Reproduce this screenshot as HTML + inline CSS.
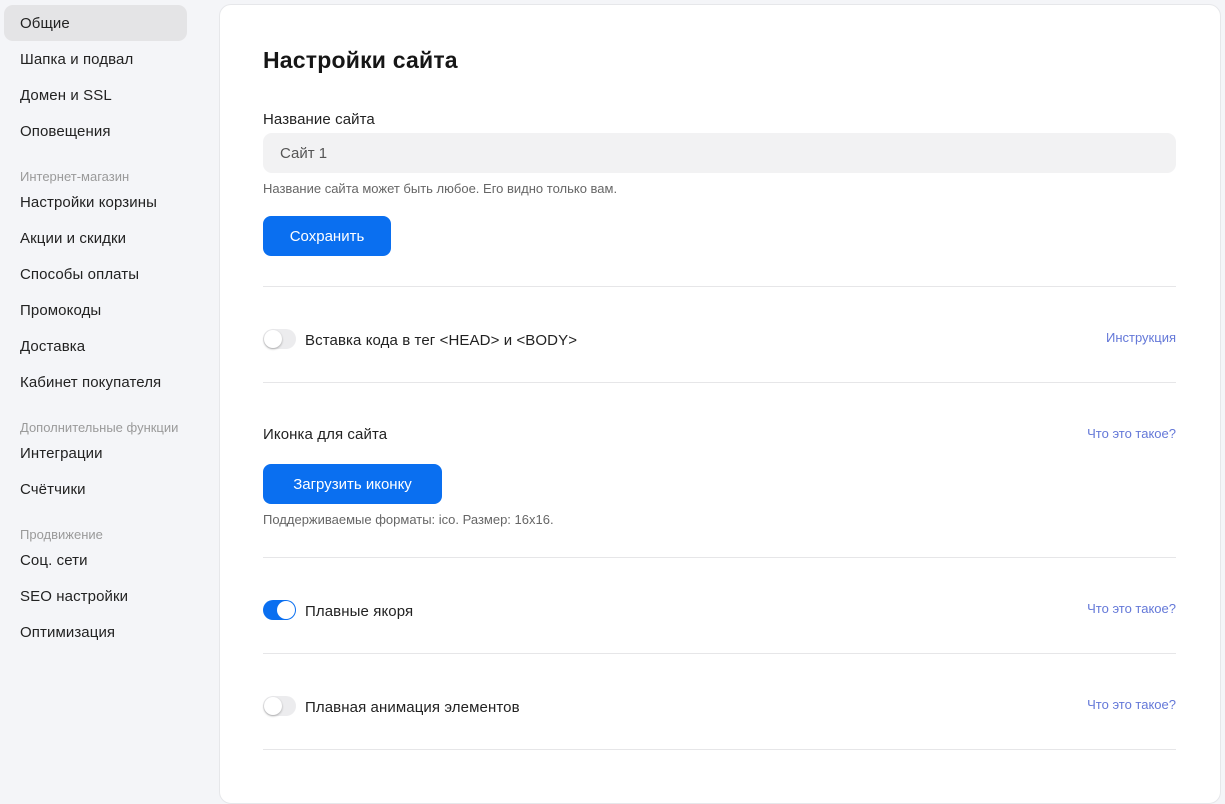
<!DOCTYPE html>
<html><head><meta charset="utf-8"><style>
*{box-sizing:border-box;margin:0;padding:0}
body{width:1225px;height:787px;overflow:hidden;background:#f4f5f8;font-family:"Liberation Sans",Arial,sans-serif;color:#1f1f1f;position:relative}
.nav{position:absolute;left:4px;top:0;width:183px}
.it{position:absolute;left:0;width:183px;height:36px;line-height:38px;padding-left:16px;font-size:15px;color:#222;border-radius:9px;letter-spacing:.1px}
.it.a{background:#e4e4e6}
.hd{position:absolute;left:16px;font-size:13px;color:#9a9a9a;margin-top:1px}
.card{position:absolute;left:219px;top:4px;width:1002px;height:800px;background:#fff;border:1px solid #e6e7ea;border-radius:12px}
.abs{position:absolute}
h1{position:absolute;left:263px;top:47px;font-size:23px;font-weight:bold;color:#161616;letter-spacing:.2px}
.lbl{font-size:15px;color:#222;margin-top:1px;letter-spacing:.1px}
.inp{left:263px;top:133px;width:913px;height:40px;background:#f2f2f3;border-radius:9px;padding-left:17px;line-height:42px;font-size:15px;color:#555}
.hint{font-size:13px;color:#666;margin-top:1px}
.btn{background:#0a6ff0;color:#fff;font-size:15px;border-radius:8px;text-align:center;height:40px;line-height:42px}
.hr{left:263px;width:913px;height:1px;background:#e6e6e8}
.tg{width:33px;height:20px;border-radius:10px;background:#ececee;left:263px}
.tg::after{content:"";position:absolute;left:1px;top:1px;width:18px;height:18px;border-radius:50%;background:#fff;box-shadow:0 1px 2px rgba(0,0,0,.3)}
.tg.on{background:#0a6ff0}
.tg.on::after{left:14px;box-shadow:none}
.lk{font-size:13px;color:#6478d8;right:49px;margin-top:1px}
</style></head><body>
<div class="nav">
<div class="it a" style="top:5px">Общие</div>
<div class="it" style="top:41px">Шапка и подвал</div>
<div class="it" style="top:77px">Домен и SSL</div>
<div class="it" style="top:113px">Оповещения</div>
<div class="hd" style="top:168px">Интернет-магазин</div>
<div class="it" style="top:184px">Настройки корзины</div>
<div class="it" style="top:220px">Акции и скидки</div>
<div class="it" style="top:256px">Способы оплаты</div>
<div class="it" style="top:292px">Промокоды</div>
<div class="it" style="top:328px">Доставка</div>
<div class="it" style="top:364px">Кабинет покупателя</div>
<div class="hd" style="top:419px">Дополнительные функции</div>
<div class="it" style="top:435px">Интеграции</div>
<div class="it" style="top:471px">Счётчики</div>
<div class="hd" style="top:526px">Продвижение</div>
<div class="it" style="top:542px">Соц. сети</div>
<div class="it" style="top:578px">SEO настройки</div>
<div class="it" style="top:614px">Оптимизация</div>
</div>
<div class="card"></div>
<h1>Настройки сайта</h1>
<div class="abs lbl" style="left:263px;top:110px">Название сайта</div>
<div class="abs inp">Сайт 1</div>
<div class="abs hint" style="left:263px;top:180px">Название сайта может быть любое. Его видно только вам.</div>
<div class="abs btn" style="left:263px;top:216px;width:128px">Сохранить</div>
<div class="abs hr" style="top:286px"></div>
<div class="abs tg" style="top:329px"></div>
<div class="abs lbl" style="left:305px;top:331px">Вставка кода в тег &lt;HEAD&gt; и &lt;BODY&gt;</div>
<div class="abs lk" style="top:329px">Инструкция</div>
<div class="abs hr" style="top:382px"></div>
<div class="abs lbl" style="left:263px;top:425px">Иконка для сайта</div>
<div class="abs lk" style="top:425px">Что это такое?</div>
<div class="abs btn" style="left:263px;top:464px;width:179px">Загрузить иконку</div>
<div class="abs hint" style="left:263px;top:511px">Поддерживаемые форматы: ico. Размер: 16x16.</div>
<div class="abs hr" style="top:557px"></div>
<div class="abs tg on" style="top:600px"></div>
<div class="abs lbl" style="left:305px;top:602px">Плавные якоря</div>
<div class="abs lk" style="top:600px">Что это такое?</div>
<div class="abs hr" style="top:653px"></div>
<div class="abs tg" style="top:696px"></div>
<div class="abs lbl" style="left:305px;top:698px">Плавная анимация элементов</div>
<div class="abs lk" style="top:696px">Что это такое?</div>
<div class="abs hr" style="top:749px"></div>
</body></html>
